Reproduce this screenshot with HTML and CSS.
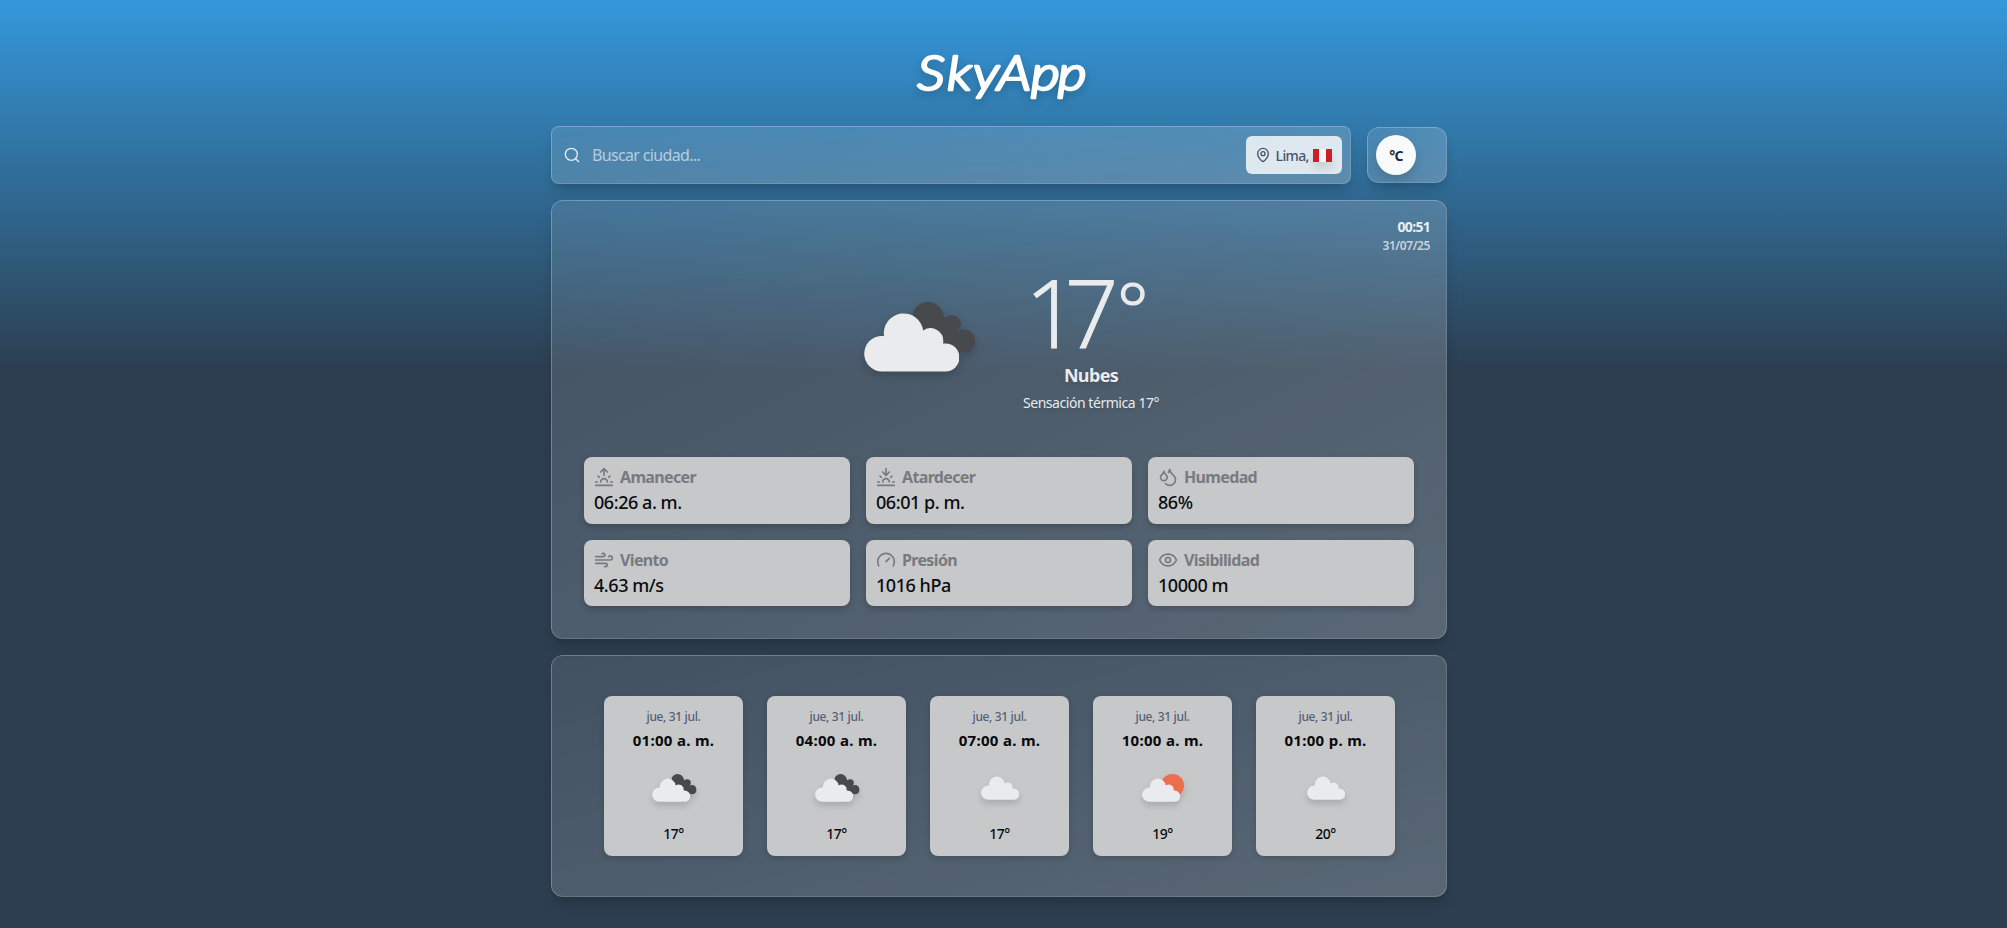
FILE: index.html
```html
<!DOCTYPE html>
<html lang="es">
<head>
<meta charset="utf-8">
<title>SkyApp</title>
<link rel="stylesheet" href="styles.css">
</head>
<body>
<svg class="defs" width="0" height="0" aria-hidden="true">
  <symbol id="cloud" viewBox="0 0 95 60"><path d="M18 59.5a17.8 17.8 0 0 1 0-35.6h2A19.7 19.7 0 0 1 59.2 18.5 12.8 12.8 0 0 1 79 31.5h2.5a14 14 0 0 1 0 28z"/></symbol>
  <symbol id="dark" viewBox="0 0 62 51"><circle cx="15" cy="16" r="16"/><circle cx="39" cy="22" r="9"/><circle cx="51" cy="39" r="11.500"/><path d="M10 14H30L40 20 46 36V44H20z"/></symbol>
</svg>
<main class="app">
  <h1 class="logo"><svg width="190" height="62" viewBox="0 0 190 62"><text transform="scale(1.16 1)" x="11.500 37 59.500 80.500 109.500 132.500" y="48">SkyApp</text></svg></h1>
  <div class="toolbar">
    <div class="search glass">
      <svg class="icon i16" viewBox="0 0 24 24"><circle cx="11" cy="11" r="9"/><path d="m22 22-4.500-4.500"/></svg>
      <span class="placeholder">Buscar ciudad...</span>
      <div class="place">
        <svg class="icon i16" viewBox="0 0 24 24"><path d="M20 10c0 5-5.500 10.200-7.400 11.800a1 1 0 0 1-1.200 0C9.500 20.200 4 15 4 10a8 8 0 0 1 16 0"/><circle cx="12" cy="10" r="3"/></svg>
        <span class="city">Lima,</span><span class="flag"></span>
      </div>
    </div>
    <div class="toggle glass"><span class="knob">°C</span></div>
  </div>
  <section class="current glass">
    <div class="stamp"><b>00:51</b><span>31/07/25</span></div>
    <div class="hero">
      <svg class="hero-icon" width="112" height="71" viewBox="0 0 112 71"><use href="#dark" x="49" y="0" width="62" height="51" fill="#48494d"/><use href="#cloud" x="0" y="10" width="95" height="60" fill="#e9ebed"/></svg>
      <div class="reading">
        <div class="temp">1<span class="unit">7</span><span class="ring">°</span></div>
        <div class="cond">Nubes</div>
        <div class="feels">Sensación térmica 17°</div>
      </div>
    </div>
    <div class="stats">
      <div class="stat"><div class="label"><svg class="icon i20" viewBox="0 0 24 24"><path d="M12 2v8m-7.100.9 1.400 1.400M2 18h2m16 0h2m-2.900-7.100-1.400 1.400M22 22H2M8 6l4-4 4 4m0 12a4 4 0 0 0-8 0"/></svg><span>Amanecer</span></div><div class="value">06:26 a. m.</div></div>
      <div class="stat"><div class="label"><svg class="icon i20" viewBox="0 0 24 24"><path d="M12 10V2m-7.100 8.900 1.400 1.400M2 18h2m16 0h2m-2.900-7.100-1.400 1.400M22 22H2M16 6l-4 4-4-4m8 12a4 4 0 0 0-8 0"/></svg><span>Atardecer</span></div><div class="value">06:01 p. m.</div></div>
      <div class="stat"><div class="label"><svg class="icon i20" viewBox="0 0 24 24"><path d="M7 16.300c2.200 0 4-1.830 4-4.050 0-1.160-.57-2.260-1.710-3.190S7.290 6.750 7 5.300c-.29 1.450-1.140 2.840-2.290 3.760S3 11.100 3 12.250c0 2.220 1.800 4.050 4 4.050z"/><path d="M12.560 6.600A10.970 10.970 0 0 0 14 3.020c.5 2.500 2 4.900 4 6.500s3 3.500 3 5.500a6.980 6.980 0 0 1-11.910 4.970"/></svg><span>Humedad</span></div><div class="value">86%</div></div>
      <div class="stat"><div class="label"><svg class="icon i20" viewBox="0 0 24 24"><path d="M12.800 19.600A2 2 0 1 0 14 16H2M17.500 8a2.500 2.500 0 1 1 2 4H2M9.800 4.400A2 2 0 1 1 11 8H2"/></svg><span>Viento</span></div><div class="value">4.63 m/s</div></div>
      <div class="stat"><div class="label"><svg class="icon i20" viewBox="0 0 24 24"><path d="m12 14 4-4M3.340 19a10 10 0 1 1 17.320 0"/></svg><span>Presión</span></div><div class="value">1016 hPa</div></div>
      <div class="stat"><div class="label"><svg class="icon i20" viewBox="0 0 24 24"><path d="M2.060 12.350a1 1 0 0 1 0-.7 10.750 10.750 0 0 1 19.880 0 1 1 0 0 1 0 .7 10.750 10.750 0 0 1-19.880 0"/><circle cx="12" cy="12" r="3"/></svg><span>Visibilidad</span></div><div class="value">10000 m</div></div>
    </div>
  </section>
  <section class="forecast glass">
    <div class="hour"><div class="day">jue, 31 jul.</div><div class="time">01:00 a. m.</div><svg class="mini" viewBox="0 0 50 50"><use href="#dark" x="22.500" y="11" width="25" height="20.500" fill="#48494d"/><use href="#cloud" x="3" y="15" width="38" height="24" fill="#e9ebed"/></svg><div class="deg">17°</div></div>
    <div class="hour"><div class="day">jue, 31 jul.</div><div class="time">04:00 a. m.</div><svg class="mini" viewBox="0 0 50 50"><use href="#dark" x="22.500" y="11" width="25" height="20.500" fill="#48494d"/><use href="#cloud" x="3" y="15" width="38" height="24" fill="#e9ebed"/></svg><div class="deg">17°</div></div>
    <div class="hour"><div class="day">jue, 31 jul.</div><div class="time">07:00 a. m.</div><svg class="mini" viewBox="0 0 50 50"><use href="#cloud" x="6" y="13" width="38" height="24" fill="#e9ebed"/></svg><div class="deg">17°</div></div>
    <div class="hour"><div class="day">jue, 31 jul.</div><div class="time">10:00 a. m.</div><svg class="mini" viewBox="0 0 50 50"><circle cx="34.500" cy="22.500" r="11.500" fill="#ec6e4c"/><use href="#cloud" x="4" y="15" width="38" height="24" fill="#e9ebed"/></svg><div class="deg">19°</div></div>
    <div class="hour"><div class="day">jue, 31 jul.</div><div class="time">01:00 p. m.</div><svg class="mini" viewBox="0 0 50 50"><use href="#cloud" x="6" y="13" width="38" height="24" fill="#e9ebed"/></svg><div class="deg">20°</div></div>
  </section>
</main>
</body>
</html>
```
FILE: styles.css
```css
* { box-sizing: border-box; }
body {
  margin: 0;
  height: 928px;
  overflow: hidden;
  padding-right: 9px;
  font-family: "Noto Sans", "Open Sans", sans-serif;
  background: linear-gradient(to bottom, #3498db 0%, #2c3e50 40%, #2c3e50 100%);
}
.defs { position: absolute; }
.app { width: 896px; margin: 0 auto; padding-top: 42px; display: flex; flex-direction: column; }
.logo { margin: 0 0 22px; height: 62px; display: flex; justify-content: center; }
.logo svg { overflow: visible; filter: drop-shadow(0 4px 4px rgba(0,0,0,.2)); }
.logo text {
  font: italic 300 48px Lato, sans-serif;
  fill: #fff; stroke: #fff; stroke-width: 2.7px; stroke-linejoin: round;
}
.glass {
  border: 1px solid rgba(255,255,255,.2);
  background: linear-gradient(to bottom right, rgba(255,255,255,.1), rgba(255,255,255,.22));
  box-shadow: 0 10px 15px -3px rgba(0,0,0,.15), 0 4px 6px -4px rgba(0,0,0,.15);
}
.icon { fill: none; stroke: currentColor; stroke-width: 2; stroke-linecap: round; stroke-linejoin: round; flex: none; }
.i16 { width: 16px; height: 16px; }
.i20 { width: 20px; height: 20px; }
.toolbar { display: flex; align-items: center; gap: 16px; height: 58px; }
.search { flex: 1; height: 58px; border-radius: 8px; display: flex; align-items: center; padding: 0 8px 0 12px; color: #e4edf3; }
.placeholder { margin-left: 12px; font-size: 16px; letter-spacing: -.65px; color: rgba(255,255,255,.6); flex: 1; }
.place { width: 96px; height: 38px; padding-left: 9px; border-radius: 6px; background: rgba(255,255,255,.8); color: #475569; display: flex; align-items: center; }
.city { margin: 0 4.500px 0 4.500px; font-size: 14px; font-weight: 500; letter-spacing: -.6px; }
.flag { width: 19px; height: 13px; background: linear-gradient(to right, #d01c27 33%, #f3f5f7 33% 66%, #d01c27 66%); box-shadow: 0 6px 8px rgba(0,0,0,.1); }
.toggle { width: 80px; height: 56px; border-radius: 12px; padding: 7px 8px; }
.knob { display: flex; align-items: center; justify-content: center; width: 40px; height: 40px; border-radius: 50%; background: #f9fafc; color: #1e293b; font-size: 14px; font-weight: 700; letter-spacing: -.6px; box-shadow: 0 5px 8px rgba(0,0,0,.12); }
.current { margin-top: 16px; height: 439px; border-radius: 12px; padding: 17px 16px 0; }
.stamp { height: 38px; display: flex; flex-direction: column; align-items: flex-end; color: rgba(255,255,255,.9); font-size: 14px; line-height: 16px; letter-spacing: -.5px; }
.stamp b { font-weight: 700; line-height: 18px; letter-spacing: -.7px; }
.stamp span { font-size: 12px; font-weight: 600; color: rgba(255,255,255,.7); line-height: 19px; letter-spacing: -.4px; }
.hero { height: 201px; display: flex; padding-left: 296px; color: #e9ebed; }
.hero-icon { margin-top: 46px; filter: drop-shadow(0 4px 4px rgba(0,0,0,.18)); }
.reading { width: 140px; margin-left: 45px; padding-top: 8px; text-align: center; text-shadow: 0 2px 4px rgba(0,0,0,.15); white-space: nowrap; }
.temp { height: 96px; padding-right: 8px; font: 300 94px/96px "Open Sans", sans-serif; letter-spacing: -14px; text-shadow: none; -webkit-text-stroke: 1.2px #e9ebed; }
.unit { letter-spacing: -2px; }
.ring { font-size: 76px; line-height: 1px; vertical-align: 10px; letter-spacing: 0; }
.cond { margin-top: 1px; font-size: 18px; font-weight: 700; line-height: 28px; letter-spacing: -.65px; }
.feels { margin-top: 4px; font-size: 14px; line-height: 20px; letter-spacing: -.45px; }
.stats { display: grid; grid-template-columns: repeat(3, 266px); grid-template-rows: 67px 66px; gap: 16px; padding-left: 16px; }
.stat { border-radius: 8px; padding: 8px 10px; background: #c7c8ca; box-shadow: 0 3px 6px rgba(0,0,0,.18); }
.label { display: flex; align-items: center; gap: 6px; height: 24px; color: #777a7e; font-size: 16px; font-weight: 700; letter-spacing: -.65px; }
.value { font-size: 18px; line-height: 27px; font-weight: 500; color: #0b0c0e; letter-spacing: -.45px; }
.forecast { margin-top: 16px; height: 242px; border-radius: 12px; padding: 40px 50px 0 52px; display: flex; gap: 24px; }
.hour { flex: none; width: 139px; height: 160px; border-radius: 8px; background: #c7c8ca; box-shadow: 0 2px 6px rgba(0,0,0,.16); display: flex; flex-direction: column; align-items: center; padding-top: 12px; color: #08090b; }
.day { font-size: 12px; line-height: 18px; font-weight: 500; color: #556073; letter-spacing: -.35px; }
.time { margin-top: 2px; font-size: 15px; line-height: 24px; font-weight: 700; letter-spacing: .3px; }
.mini { width: 50px; height: 50px; margin-top: 11px; filter: drop-shadow(0 4px 3px rgba(0,0,0,.15)); }
.deg { margin-top: 11px; font-size: 14px; line-height: 20px; font-weight: 500; letter-spacing: -.5px; }
```
